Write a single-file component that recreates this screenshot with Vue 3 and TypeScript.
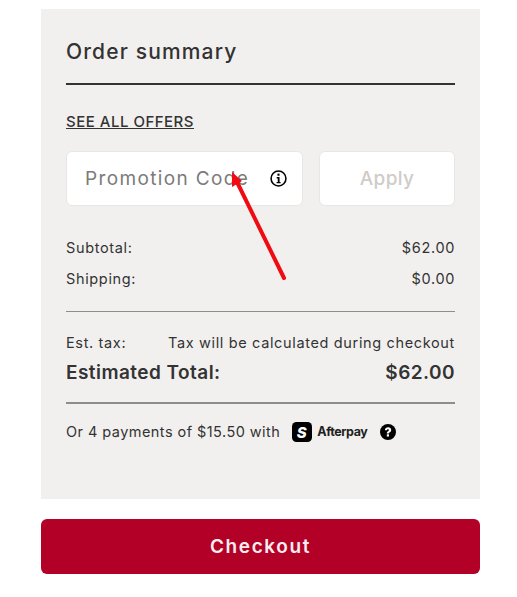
<script setup lang="ts">
const rows = [
  { label: 'Subtotal:', value: '$62.00' },
  { label: 'Shipping:', value: '$0.00' },
]
</script>

<template>
  <main class="page">
    <section class="panel">
      <h2 class="title">Order summary</h2>
      <a class="offers" href="#">SEE ALL OFFERS</a>
      <div class="promo">
        <div class="field">
          <span class="placeholder">Promotion Code</span>
          <svg class="info" width="17" height="17" viewBox="0 0 16 16" aria-hidden="true">
            <circle cx="8" cy="8" r="7" fill="none" stroke="#000" stroke-width="1.5" />
            <rect x="7" y="3.4" width="2" height="2" fill="#000" />
            <path d="M6.3 6.7H9v4.6h1v1.2H6.2v-1.2h1.1V7.9h-1z" fill="#000" />
          </svg>
        </div>
        <button class="apply" type="button">Apply</button>
      </div>
      <div class="rows">
        <div v-for="row in rows" :key="row.label" class="row">
          <span>{{ row.label }}</span>
          <span>{{ row.value }}</span>
        </div>
      </div>
      <div class="tax row">
        <span>Est. tax:</span>
        <span>Tax will be calculated during checkout</span>
      </div>
      <div class="total">
        <span>Estimated Total:</span>
        <span>$62.00</span>
      </div>
      <div class="pay">
        <span>Or 4 payments of $15.50 with</span>
        <svg class="logo-mark" width="20" height="20" viewBox="0 0 20 20" aria-hidden="true">
          <rect width="20" height="20" rx="4.5" fill="#000" />
          <text x="10" y="15.5" text-anchor="middle" class="logo-s">S</text>
        </svg>
        <span class="afterpay">Afterpay</span>
        <svg class="help" width="16" height="16" viewBox="0 0 16 16" aria-hidden="true">
          <circle cx="8" cy="8" r="8" fill="#000" />
          <path d="M4.9 6.2C5 4.4 6.3 3.300 8.100 3.300c1.800 0 3.100 1.100 3.100 2.600 0 1.200-.6 1.800-1.400 2.300-.6.400-.8.700-.8 1.300H6.800c0-1.200.4-1.800 1.200-2.300.6-.4.900-.7.900-1.200 0-.5-.4-.8-.9-.8-.6 0-1 .4-1 1z" fill="#fff" />
          <rect x="6.800" y="10.300" width="2.200" height="2.200" fill="#fff" />
        </svg>
      </div>
    </section>
    <button class="checkout" type="button">Checkout</button>
    <svg class="arrow" width="517" height="597" viewBox="0 0 517 597" aria-hidden="true">
      <path d="M284 278 237 182" stroke="#f00a12" stroke-width="4" stroke-linecap="round" fill="none" />
      <path d="M232 172 242 181 232 187z" fill="#f00a12" />
    </svg>
  </main>
</template>

<style>
html,
body {
  margin: 0;
  background: #fff;
}
</style>

<style scoped>
.page {
  position: relative;
  box-sizing: border-box;
  width: 517px;
  height: 597px;
  padding: 9px 37px 0 41px;
  overflow: hidden;
  font-family: "Inter", "Liberation Sans", sans-serif;
  color: #333;
}
.panel {
  box-sizing: border-box;
  height: 490px;
  padding: 30px 25px 0;
  background: #f2f0ef;
}
.title {
  margin: 0;
  padding-bottom: 19px;
  border-bottom: 2px solid #333;
  font-size: 21px;
  line-height: 25px;
  font-weight: 500;
  letter-spacing: 1.15px;
}
.offers {
  display: block;
  width: max-content;
  margin-top: 28px;
  font-size: 15px;
  line-height: 17px;
  font-weight: 500;
  letter-spacing: 0.5px;
  color: #333;
  text-decoration: underline;
}
.promo {
  display: flex;
  gap: 16px;
  margin-top: 21px;
}
.field {
  display: flex;
  align-items: center;
  justify-content: space-between;
  box-sizing: border-box;
  width: 237px;
  height: 55px;
  padding: 0 15px 0 18px;
  background: #fff;
  border: 1px solid #e9e7e6;
  border-radius: 6px;
}
.placeholder {
  font-size: 19px;
  letter-spacing: 1.35px;
  color: #7c7a7a;
  white-space: nowrap;
}
.apply {
  width: 136px;
  height: 55px;
  padding: 0;
  background: #fff;
  border: 1px solid #e9e7e6;
  border-radius: 6px;
  font: 500 19px "Inter", "Liberation Sans", sans-serif;
  letter-spacing: 0.3px;
  color: #cfcbc8;
}
.rows {
  display: flex;
  flex-direction: column;
  gap: 13px;
  margin-top: 33px;
  padding-bottom: 23px;
  border-bottom: 1px solid #8f8d8c;
}
.row {
  display: flex;
  justify-content: space-between;
  font-size: 14.5px;
  line-height: 18px;
  letter-spacing: 0.65px;
  white-space: nowrap;
}
.tax {
  margin-top: 22px;
}
.total {
  display: flex;
  justify-content: space-between;
  margin-top: 9px;
  padding-bottom: 17px;
  border-bottom: 2px solid #8f8d8c;
  font-size: 19px;
  line-height: 24px;
  font-weight: 600;
  letter-spacing: 0.45px;
}
.pay {
  display: flex;
  align-items: center;
  margin-top: 18px;
  font-size: 14.5px;
  line-height: 20px;
  letter-spacing: 0.45px;
  white-space: nowrap;
}
.logo-mark {
  margin-left: 12px;
}
.logo-s {
  font: italic 800 15px "Inter", sans-serif;
  fill: #fff;
}
.afterpay {
  margin-left: 5px;
  font-size: 12.5px;
  font-weight: 700;
  letter-spacing: -0.4px;
  color: #222;
}
.help {
  margin-left: 13px;
}
.checkout {
  display: block;
  width: 439px;
  height: 55px;
  margin-top: 20px;
  padding: 0;
  background: #b30026;
  border: 0;
  border-radius: 6px;
  font: 600 19px "Inter", "Liberation Sans", sans-serif;
  letter-spacing: 1.6px;
  color: #fbeef0;
}
.arrow {
  position: absolute;
  top: 0;
  left: 0;
  pointer-events: none;
}
</style>
